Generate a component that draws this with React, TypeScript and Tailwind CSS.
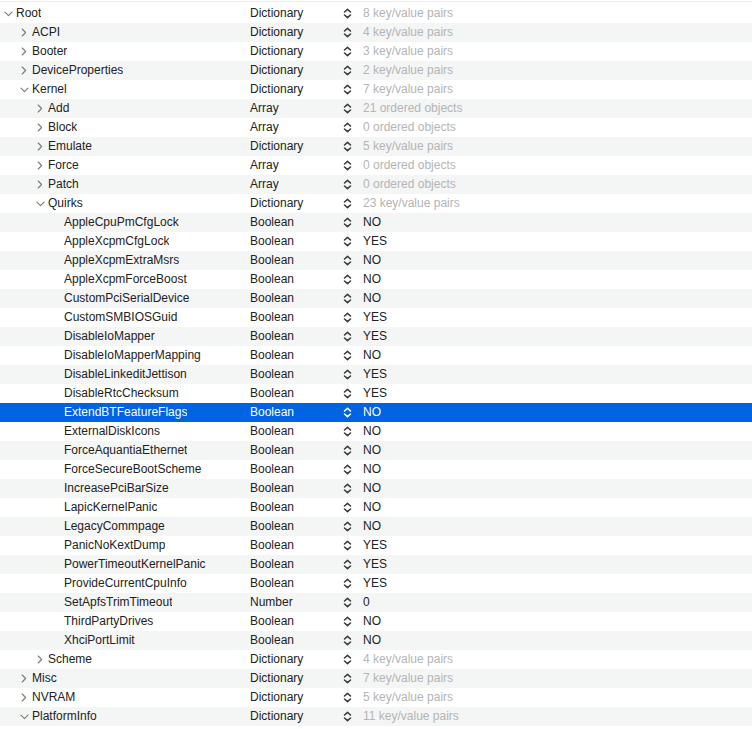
import React from 'react';

type Row = {
  key: string;
  level: number;
  type: string;
  value: string;
  open?: boolean;
  leaf?: boolean;
  muted?: boolean;
  selected?: boolean;
};

const q = (key: string, value: string, type = 'Boolean'): Row => ({
  key,
  level: 3,
  type,
  value,
  leaf: true,
});

const ROWS: Row[] = [
  { key: 'Root', level: 0, type: 'Dictionary', value: '8 key/value pairs', open: true, muted: true },
  { key: 'ACPI', level: 1, type: 'Dictionary', value: '4 key/value pairs', muted: true },
  { key: 'Booter', level: 1, type: 'Dictionary', value: '3 key/value pairs', muted: true },
  { key: 'DeviceProperties', level: 1, type: 'Dictionary', value: '2 key/value pairs', muted: true },
  { key: 'Kernel', level: 1, type: 'Dictionary', value: '7 key/value pairs', open: true, muted: true },
  { key: 'Add', level: 2, type: 'Array', value: '21 ordered objects', muted: true },
  { key: 'Block', level: 2, type: 'Array', value: '0 ordered objects', muted: true },
  { key: 'Emulate', level: 2, type: 'Dictionary', value: '5 key/value pairs', muted: true },
  { key: 'Force', level: 2, type: 'Array', value: '0 ordered objects', muted: true },
  { key: 'Patch', level: 2, type: 'Array', value: '0 ordered objects', muted: true },
  { key: 'Quirks', level: 2, type: 'Dictionary', value: '23 key/value pairs', open: true, muted: true },
  q('AppleCpuPmCfgLock', 'NO'),
  q('AppleXcpmCfgLock', 'YES'),
  q('AppleXcpmExtraMsrs', 'NO'),
  q('AppleXcpmForceBoost', 'NO'),
  q('CustomPciSerialDevice', 'NO'),
  q('CustomSMBIOSGuid', 'YES'),
  q('DisableIoMapper', 'YES'),
  q('DisableIoMapperMapping', 'NO'),
  q('DisableLinkeditJettison', 'YES'),
  q('DisableRtcChecksum', 'YES'),
  { ...q('ExtendBTFeatureFlags', 'NO'), selected: true },
  q('ExternalDiskIcons', 'NO'),
  q('ForceAquantiaEthernet', 'NO'),
  q('ForceSecureBootScheme', 'NO'),
  q('IncreasePciBarSize', 'NO'),
  q('LapicKernelPanic', 'NO'),
  q('LegacyCommpage', 'NO'),
  q('PanicNoKextDump', 'YES'),
  q('PowerTimeoutKernelPanic', 'YES'),
  q('ProvideCurrentCpuInfo', 'YES'),
  q('SetApfsTrimTimeout', '0', 'Number'),
  q('ThirdPartyDrives', 'NO'),
  q('XhciPortLimit', 'NO'),
  { key: 'Scheme', level: 2, type: 'Dictionary', value: '4 key/value pairs', muted: true },
  { key: 'Misc', level: 1, type: 'Dictionary', value: '7 key/value pairs', muted: true },
  { key: 'NVRAM', level: 1, type: 'Dictionary', value: '5 key/value pairs', muted: true },
  { key: 'PlatformInfo', level: 1, type: 'Dictionary', value: '11 key/value pairs', open: true, muted: true },
];

// small disclosure triangle, drawn as a thin chevron
const Disclosure = ({ open }: { open?: boolean }) =>
  open ? (
    <svg width="9" height="6" viewBox="0 0 9 6" className="shrink-0">
      <path d="M1 1.2 L4.5 4.6 L8 1.2" fill="none" stroke="#7a7a7a" strokeWidth="1.1" strokeLinecap="round" strokeLinejoin="round" />
    </svg>
  ) : (
    <svg width="6" height="9" viewBox="0 0 6 9" className="shrink-0">
      <path d="M1.2 1 L4.6 4.5 L1.2 8" fill="none" stroke="#7a7a7a" strokeWidth="1.1" strokeLinecap="round" strokeLinejoin="round" />
    </svg>
  );

const Stepper = ({ light }: { light?: boolean }) => (
  <svg width="9" height="11" viewBox="0 0 9 11">
    <path
      d="M1.5 4 L4.5 1.3 L7.5 4 M1.5 7 L4.5 9.7 L7.5 7"
      fill="none"
      stroke={light ? '#ffffff' : '#3c3c3c'}
      strokeWidth="1.6"
      strokeLinecap="round"
      strokeLinejoin="round"
    />
  </svg>
);

export default function App() {
  return (
    <div
      className="w-[752px] h-[729px] overflow-hidden bg-white pt-[1px] text-[12px] text-[#222222]"
      style={{ fontFamily: '"Liberation Sans", Arial, sans-serif' }}
    >
      <div className="border-t border-[#ececec] pt-[2px]">
        {ROWS.map((r, i) => {
          const bg = r.selected ? 'bg-[#0063e1]' : i % 2 === 1 ? 'bg-[#f4f5f5]' : 'bg-white';
          return (
            <div key={r.key} className={`flex items-center h-[19px] leading-[19px] ${bg} ${r.selected ? 'text-white' : ''}`}>
              {/* key column */}
              <div className="w-[250px] flex items-center shrink-0" style={{ paddingLeft: r.level * 16 }}>
                <div className="w-[16px] flex justify-center items-center">
                  {!r.leaf && <Disclosure open={r.open} />}
                </div>
                <span className="truncate">{r.key}</span>
              </div>
              {/* type column */}
              <div className="w-[93px] shrink-0">{r.type}</div>
              {/* value column */}
              <div className="flex items-center gap-[11px]">
                <Stepper light={r.selected} />
                <span className={r.muted ? 'text-[#b4b4b4]' : ''}>{r.value}</span>
              </div>
            </div>
          );
        })}
      </div>
    </div>
  );
}
